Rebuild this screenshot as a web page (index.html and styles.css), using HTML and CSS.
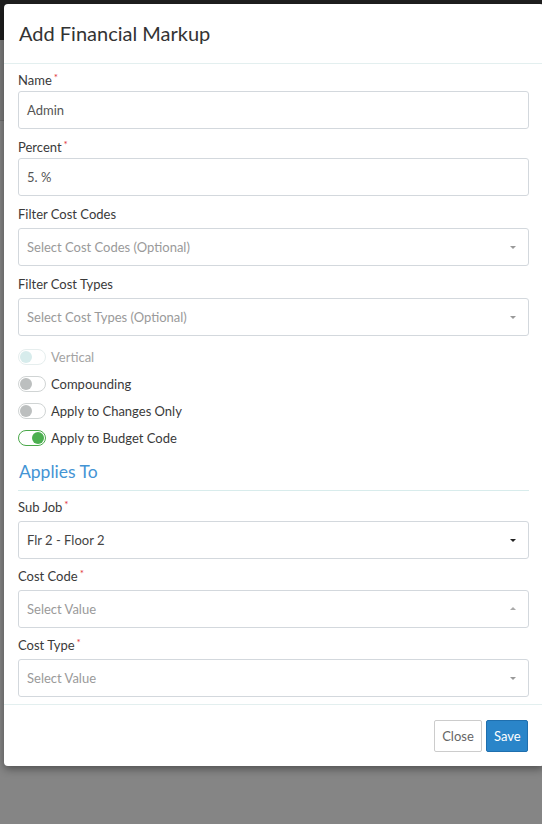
FILE: index.html
```html
<!DOCTYPE html>
<html>
<head>
<meta charset="utf-8">
<link rel="stylesheet" href="styles.css">
</head>
<body>
<div class="page">
  <div class="page-nav"></div>
  <div class="page-sub"></div>
  <div class="page-rest"></div>
</div>
<div class="modal">
  <div class="modal-header"><h4 class="modal-title">Add Financial Markup</h4></div>
  <div class="modal-body">
    <div class="group">
      <label class="lbl">Name<span class="req">*</span></label>
      <div class="input">Admin</div>
    </div>
    <div class="group">
      <label class="lbl">Percent<span class="req">*</span></label>
      <div class="input">5. %</div>
    </div>
    <div class="group sel-group">
      <label class="lbl">Filter Cost Codes</label>
      <div class="input select placeholder">Select Cost Codes (Optional)<span class="caret down"></span></div>
    </div>
    <div class="group sel-group before-toggles">
      <label class="lbl">Filter Cost Types</label>
      <div class="input select placeholder">Select Cost Types (Optional)<span class="caret down"></span></div>
    </div>
    <div class="toggles">
      <div class="toggle-row disabled"><span class="switch"><span class="knob"></span></span><span class="t-lbl">Vertical</span></div>
      <div class="toggle-row"><span class="switch"><span class="knob"></span></span><span class="t-lbl">Compounding</span></div>
      <div class="toggle-row"><span class="switch"><span class="knob"></span></span><span class="t-lbl">Apply to Changes Only</span></div>
      <div class="toggle-row on"><span class="switch"><span class="knob"></span></span><span class="t-lbl">Apply to Budget Code</span></div>
    </div>
    <div class="section">Applies To</div>
    <div class="group sel-group tight">
      <label class="lbl">Sub Job<span class="req">*</span></label>
      <div class="input select value">Flr 2 - Floor 2<span class="caret down dark"></span></div>
    </div>
    <div class="group sel-group tight">
      <label class="lbl">Cost Code<span class="req">*</span></label>
      <div class="input select placeholder">Select Value<span class="caret up"></span></div>
    </div>
    <div class="group sel-group last">
      <label class="lbl">Cost Type<span class="req">*</span></label>
      <div class="input select placeholder">Select Value<span class="caret down"></span></div>
    </div>
  </div>
  <div class="modal-footer">
    <button class="btn btn-default">Close</button>
    <button class="btn btn-primary">Save</button>
  </div>
</div>
</body>
</html>
```
FILE: styles.css
```css
html, body {
  margin: 0;
  padding: 0;
  height: 100%;
  overflow: hidden;
}
body {
  background: #858585;
  font-family: Lato, "Open Sans", sans-serif;
  position: relative;
}
.page-nav {
  height: 40px;
  background: #1f1f1f;
}
.page-sub {
  height: 80px;
  background: #7c7c7c;
  border-bottom: 1px solid #6e6e6e;
}
.page-rest {
  height: 703px;
  background: #858585;
}
.modal {
  position: absolute;
  left: 4px;
  top: 4px;
  width: 540px;
  background: #fff;
  border-radius: 4px;
  box-shadow: 0 3px 9px rgba(0,0,0,0.4);
  overflow: hidden;
}
.modal-header {
  padding: 15px 15px 16px 15px;
  border-bottom: 1px solid #e3efef;
}
.modal-title {
  margin: 0;
  font-size: 20px;
  font-weight: 400;
  line-height: 28px;
  color: #333;
}
.modal-body {
  padding: 6px 15px 7px 14px;
}
.group {
  margin-bottom: 8px;
}
.group.sel-group .lbl {
  margin-bottom: 4px;
}
.group.before-toggles {
  margin-bottom: 7px;
}
.group.tight {
  margin-bottom: 7px;
}
.group.last {
  margin-bottom: 0;
}
.lbl {
  display: block;
  font-size: 13px;
  line-height: 20px;
  color: #3a3a3a;
  margin-bottom: 1px;
}
.req {
  color: #e0323a;
  font-size: 10px;
  line-height: 1;
  position: relative;
  top: -4px;
  margin-left: 2px;
}
.input {
  box-sizing: border-box;
  height: 38px;
  border: 1px solid #d3d8dd;
  border-radius: 3px;
  padding: 0 8px;
  display: flex;
  align-items: center;
  font-size: 13px;
  color: #555;
  position: relative;
}
.input.value {
  color: #444;
}
.input.placeholder {
  color: #9a9a9a;
  font-size: 13px;
}
.caret {
  position: absolute;
  right: 12px;
  top: 50%;
  width: 0;
  height: 0;
  border-left: 3.5px solid transparent;
  border-right: 3.5px solid transparent;
}
.caret.down {
  border-top: 3px solid #999;
  margin-top: -1px;
}
.caret.down.dark {
  border-top-color: #222;
}
.caret.up {
  border-bottom: 3px solid #aaa;
  margin-top: -2px;
}
.toggles {
  display: flex;
  flex-direction: column;
}
.toggle-row {
  height: 27px;
  display: flex;
  align-items: center;
  gap: 5px;
}
.switch {
  box-sizing: border-box;
  width: 28px;
  height: 16px;
  border: 1px solid #d0d4d4;
  border-radius: 8px;
  position: relative;
  background: #fff;
}
.knob {
  position: absolute;
  top: 1px;
  left: 1px;
  width: 12px;
  height: 12px;
  border-radius: 50%;
  background: #bcbfbf;
}
.toggle-row.disabled .switch {
  border-color: #e6eeee;
}
.toggle-row.disabled .knob {
  background: #d7ecec;
}
.toggle-row.disabled .t-lbl {
  color: #a3a3a3;
}
.toggle-row.on .switch {
  border-color: #4aa84a;
}
.toggle-row.on .knob {
  left: auto;
  right: 1px;
  background: #4caf50;
}
.t-lbl {
  font-size: 13px;
  color: #3a3a3a;
}
.section {
  margin-top: 8px;
  font-size: 17.5px;
  font-weight: 400;
  color: #4494d4;
  line-height: 26px;
  padding-bottom: 5px;
  border-bottom: 1px solid #d8ecec;
  margin-bottom: 6px;
  padding-left: 1px;
}
.modal-footer {
  border-top: 1px solid #e3efef;
  padding: 15px 15px 14px 15px;
  display: flex;
  justify-content: flex-end;
  gap: 4px;
}
.btn {
  font-family: Lato, "Open Sans", sans-serif;
  font-size: 13px;
  height: 32px;
  padding: 0 7px;
  border-radius: 2px;
  border: 1px solid #ccc;
  cursor: pointer;
}
.btn-default {
  background: #fff;
  color: #666;
  width: 48px;
}
.btn-primary {
  background: #2a85c9;
  border-color: #1f6fae;
  color: #fff;
  width: 42px;
  margin-right: 1px;
}
```
